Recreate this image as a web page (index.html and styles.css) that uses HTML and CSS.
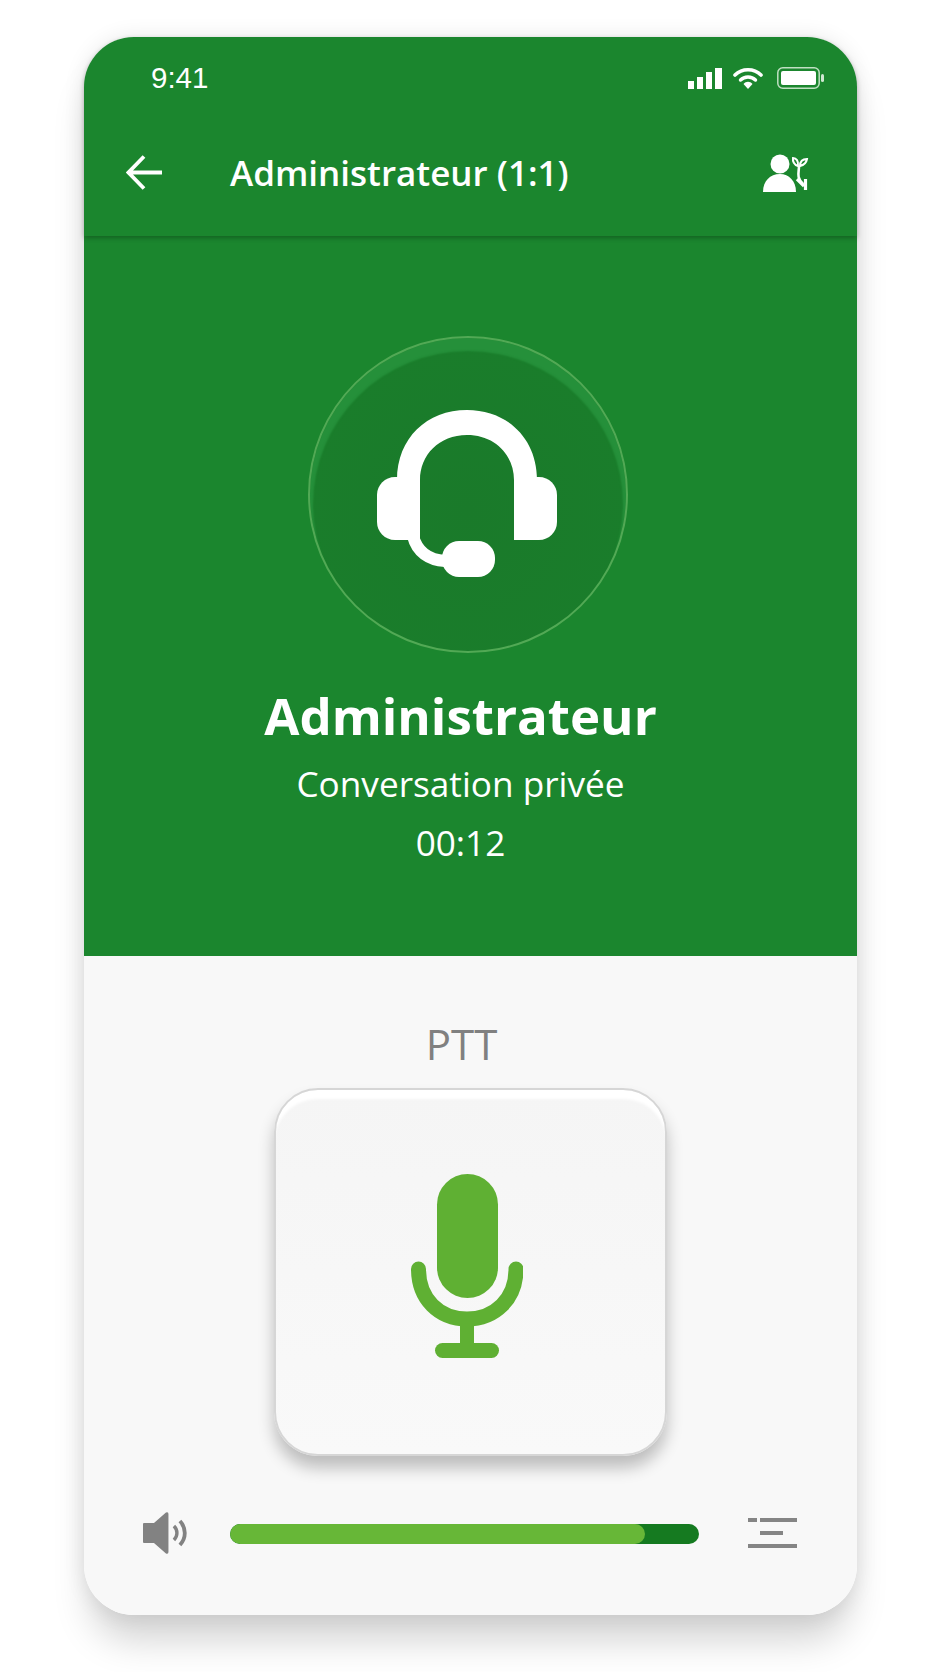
FILE: index.html
```html
<!DOCTYPE html>
<html lang="fr">
<head>
<meta charset="UTF-8">
<meta name="viewport" content="width=device-width, initial-scale=1.0">
<title>Administrateur (1:1)</title>
<link rel="stylesheet" href="styles.css">
</head>
<body>

<div class="phone">
    <!-- Barre du haut -->
    <header class="header">
        <div class="status">
            <span class="time">9:41</span>
            <div class="status-icons">
                <svg class="signal" width="34" height="21" viewBox="0 0 34 21"><rect x="0" y="13" width="6" height="8"/><rect x="9" y="9" width="6" height="12"/><rect x="18" y="4" width="6" height="17"/><rect x="27" y="0" width="7" height="21"/></svg>
                <svg class="wifi" width="30" height="22" viewBox="0 0 30 22"><path d="M2 8 C9 1 21 1 28 8" fill="none" stroke="#fff" stroke-width="3.6" stroke-linecap="round"/><path d="M7.5 13 C11.5 9 18.5 9 22.5 13" fill="none" stroke="#fff" stroke-width="3.4" stroke-linecap="round"/><path d="M10.5 17 C13 14 17 14 19.5 17 L15 22 Z" fill="#fff"/></svg>
                <svg class="battery" width="47" height="22" viewBox="0 0 47 22"><rect x="0.8" y="0.8" width="41.4" height="20.4" rx="5" fill="none" stroke="#bfe0c2" stroke-width="1.5"/><rect x="4" y="4" width="35" height="14" rx="2" fill="#fff"/><rect x="44" y="7" width="3" height="8" rx="1.5" fill="#cfe8d1"/></svg>
            </div>
        </div>
        <div class="appbar">
            <svg class="back" width="37" height="35" viewBox="0 0 37 35"><path d="M36 17.5 H3 M18 1.5 L2.5 17.5 L18 33.5" fill="none" stroke="#fff" stroke-width="3.8"/></svg>
            <h1 class="title">Administrateur (1:1)</h1>
            <svg class="user-plant" width="46" height="38" viewBox="0 0 46 38">
                <circle cx="17" cy="10" r="9.5" fill="#fff"/>
                <path d="M0 38 C0 27 7 20 17 20 C26 20 33 27 33 38 Z" fill="#fff"/>
                <path d="M36 12 C36 19 33 23 40 30" fill="none" stroke="#fff" stroke-width="2.6"/>
                <path d="M35 12 C31 11 29.5 7 30 4 C33.5 4 35.5 7 35 12 Z M37 12 C41 11 43.5 8 44 5 C40 5 37 7 37 12 Z" fill="none" stroke="#fff" stroke-width="2"/>
                <path d="M34 25 L41 32 M42.5 25 V36" fill="none" stroke="#fff" stroke-width="3.2"/>
            </svg>
        </div>
    </header>

    <!-- Appel en cours -->
    <section class="hero">
        <div class="avatar">
            <svg class="headset" width="180" height="167" viewBox="0 0 180 167" fill="#fff">
                <path d="M20 70 C20 28 50 0 90 0 C130 0 160 28 160 70 H137 C137 45 118 25 90 25 C62 25 43 45 43 70 Z"/>
                <path d="M18 67 H43 V130 H18 C8 130 0 122 0 112 V85 C0 75 8 67 18 67 Z"/>
                <path d="M137 67 H162 C172 67 180 75 180 85 V112 C180 122 172 130 162 130 H137 Z"/>
                <path d="M36 126 C40 142 52 150 68 151" fill="none" stroke="#fff" stroke-width="12"/>
                <rect x="65" y="131" width="53" height="36" rx="17"/>
            </svg>
        </div>
        <div class="call-info">
            <h2 class="name">Administrateur</h2>
            <p class="line">Conversation privée</p>
            <p class="line">00:12</p>
        </div>
    </section>

    <!-- Zone PTT -->
    <section class="panel">
        <div class="ptt-label">PTT</div>
        <button class="ptt">
            <svg width="112" height="184" viewBox="0 0 112 184" fill="#5fb033">
                <rect x="26" y="0" width="61" height="124" rx="30.5"/>
                <path d="M7.5 95 C7.5 125 28 145 56 145 C84 145 105 125 105 95" fill="none" stroke="#5fb033" stroke-width="15" stroke-linecap="round"/>
                <rect x="49" y="145" width="14" height="28"/>
                <rect x="24" y="169" width="64" height="15" rx="7.5"/>
            </svg>
        </button>
        <div class="controls">
            <svg class="speaker" width="46" height="42" viewBox="0 0 46 42">
                <path d="M0 12 Q0 11 1 11 H11 L23 0.5 Q25.5 -0.5 25.5 2 V40 Q25.5 42.5 23 41.5 L11 31 H1 Q0 31 0 30 Z" fill="#828282"/>
                <path d="M31 14 C35 18 35 24 31 28" fill="none" stroke="#828282" stroke-width="3.4"/>
                <path d="M37 9 C43.5 16 43.5 26 37 33" fill="none" stroke="#828282" stroke-width="3.8"/>
            </svg>
            <div class="bar"><div class="bar-fill" style="width: 88.5%"></div></div>
            <div class="lines">
                <div class="lines-row"><span class="dash dash-s"></span><span class="dash dash-l"></span></div>
                <div class="lines-row lines-mid"><span class="dash dash-m"></span></div>
                <div class="lines-row"><span class="dash dash-f"></span></div>
            </div>
        </div>
    </section>
</div>

</body>
</html>
```

FILE: styles.css
```css
body {
    margin: 0;
    padding: 0;
    min-height: 1672px;
    box-sizing: border-box;
    overflow: hidden;
    background-color: #fff;
    font-family: "Open Sans", sans-serif;
}

.phone {
    width: 773px;
    height: 1578px;
    margin: 37px 0 0 84px;
    border-radius: 50px;
    display: flex;
    flex-direction: column;
    box-shadow: 0 32px 36px -6px rgba(0, 0, 0, 0.17), 0 0 22px rgba(0, 0, 0, 0.09);
}

.header {
    height: 199px;
    box-sizing: border-box;
    background-color: #1b862e;
    border-radius: 50px 50px 0 0;
    box-shadow: 0 2px 5px rgba(0, 0, 0, 0.28);
    position: relative;
    z-index: 1;
}

.status {
    display: flex;
    justify-content: space-between;
    align-items: center;
    height: 22px;
    padding: 30px 33px 0 67px;
}

.time {
    font-family: "Liberation Sans", sans-serif;
    font-size: 29.5px;
    color: #fff;
}

.status-icons {
    display: flex;
    align-items: center;
}

.signal {
    fill: #fff;
    margin-right: 11px;
}

.wifi {
    margin-right: 14px;
}

.appbar {
    display: flex;
    align-items: center;
    height: 35px;
    margin-top: 66px;
    padding: 0 48px 0 42px;
}

.title {
    flex: 1;
    margin: 0 0 0 67px;
    font-size: 35px;
    font-weight: 600;
    color: #fff;
}

.hero {
    height: 720px;
    background-color: #1b862e;
    display: flex;
    flex-direction: column;
    align-items: center;
    padding-top: 100px;
    box-sizing: border-box;
}

.avatar {
    width: 320px;
    height: 317px;
    margin-right: 6px;
    box-sizing: border-box;
    border-radius: 50%;
    border: 2px solid #52a955;
    background: radial-gradient(circle at 50% 55%, #1a7a2a 0%, #1a7d2b 70%, #1b812c 100%);
    box-shadow: inset 0 10px 2px 3px #25903a;
    display: flex;
    align-items: center;
    justify-content: center;
}

.headset {
    margin: 0 2px 3px 0;
}

.call-info {
    padding-right: 20px;
    text-align: center;
    color: #fff;
}

.name {
    margin: 23px 0 0 0;
    font-size: 51px;
    line-height: 78px;
    font-weight: 700;
}

.line {
    margin: 0;
    font-size: 35.2px;
    line-height: 59px;
}

.panel {
    flex: 1;
    background-color: #f8f8f8;
    border-radius: 0 0 50px 50px;
    display: flex;
    flex-direction: column;
    align-items: center;
    padding-top: 64px;
    box-sizing: border-box;
}

.ptt-label {
    padding-right: 18px;
    font-size: 42px;
    line-height: 48px;
    color: #808080;
}

.ptt {
    width: 393px;
    height: 368px;
    margin-top: 20px;
    padding: 0 8px 13px 0;
    box-sizing: border-box;
    border: 2px solid #d6d6d6;
    border-radius: 44px;
    background: linear-gradient(to bottom, #f5f5f5, #f9f9f9);
    box-shadow: inset 0 11px 3px -2px #fff, 0 12px 16px rgba(0, 0, 0, 0.24);
    display: flex;
    align-items: center;
    justify-content: center;
}

.controls {
    display: flex;
    align-items: center;
    align-self: stretch;
    margin-top: 56px;
    padding: 0 60px 0 59px;
}

.bar {
    width: 470px;
    height: 20px;
    margin: 2px 0 0 41px;
    border-radius: 10px;
    background-color: #157a20;
    overflow: hidden;
}

.bar-fill {
    height: 100%;
    border-radius: 10px;
    background-color: #67b737;
}

.lines {
    width: 49px;
    margin-left: 49px;
    display: flex;
    flex-direction: column;
    gap: 9px;
}

.lines-row {
    display: flex;
    gap: 3px;
}

.lines-mid {
    padding-left: 12px;
}

.dash {
    height: 4px;
    background-color: #858585;
}

.dash-s { width: 9px; }
.dash-l { width: 37px; }
.dash-m { width: 23px; }
.dash-f { width: 49px; }
```
